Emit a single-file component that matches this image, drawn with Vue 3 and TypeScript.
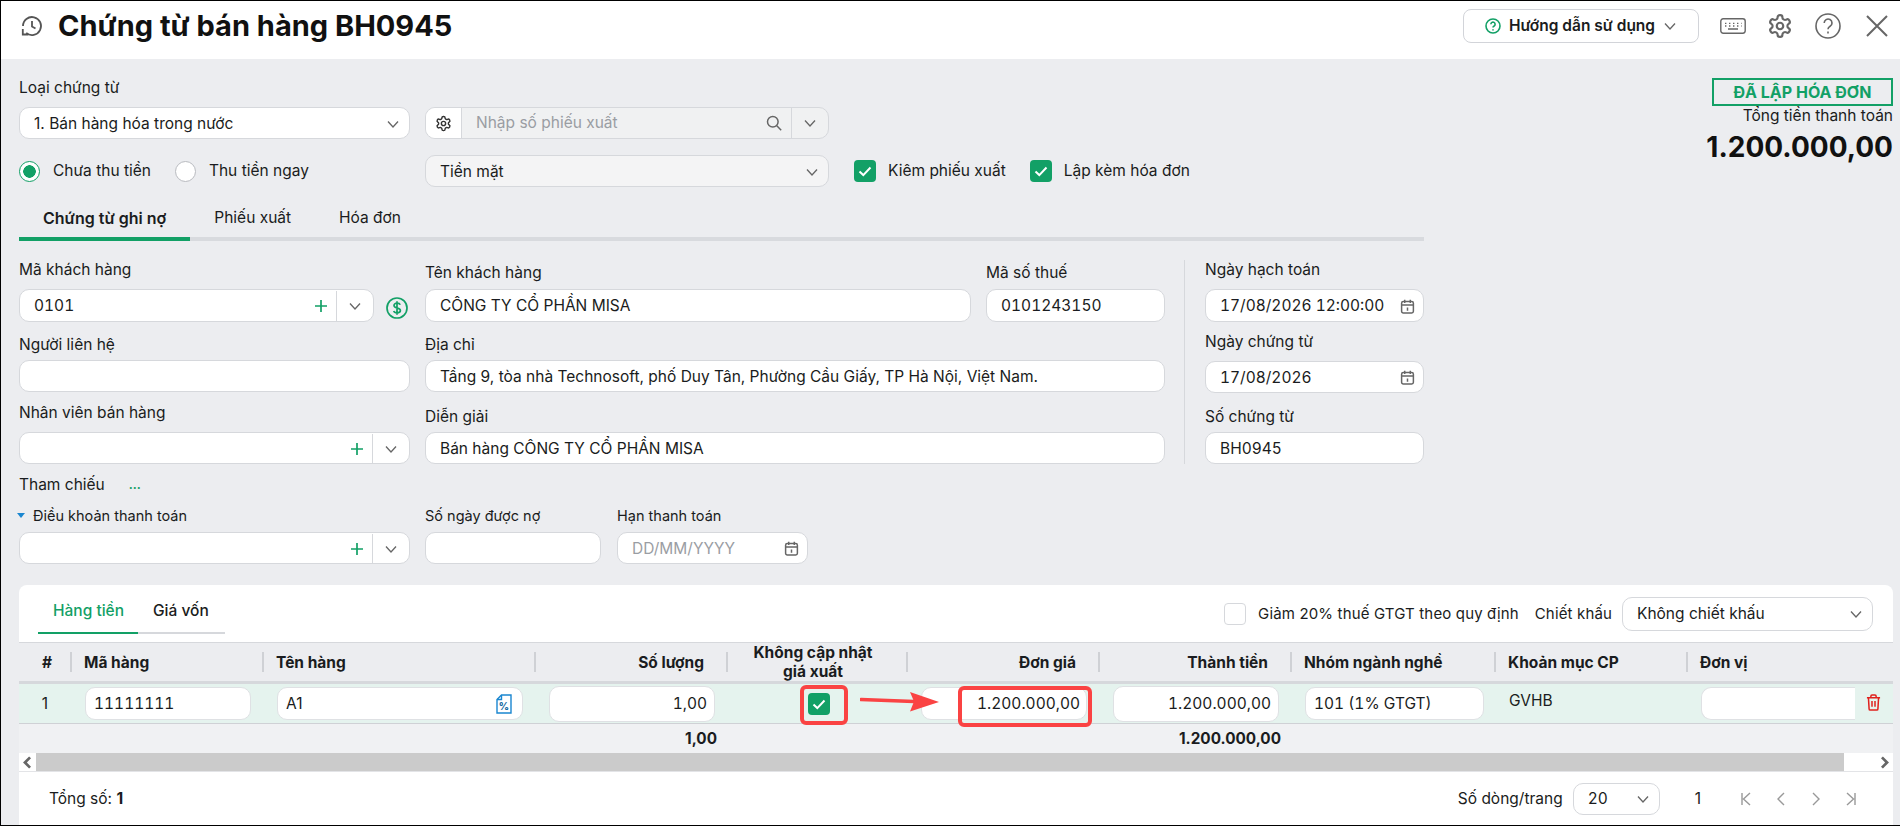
<script setup lang="ts">
interface Column {
  title: string
  width: number
  align?: 'right' | 'center'
}

const columns: Column[] = [
  { title: '#', width: 52, align: 'center' },
  { title: 'Mã hàng', width: 192 },
  { title: 'Tên hàng', width: 272 },
  { title: 'Số lượng', width: 192, align: 'right' },
  { title: 'Không cập nhật giá xuất', width: 180, align: 'center' },
  { title: 'Đơn giá', width: 192, align: 'right' },
  { title: 'Thành tiền', width: 192, align: 'right' },
  { title: 'Nhóm ngành nghề', width: 204 },
  { title: 'Khoản mục CP', width: 192 },
  { title: 'Đơn vị', width: 206 },
]

const gridTemplate = columns.map((c) => `${c.width}px`).join(' ')
</script>

<template>
  <div class="app">
    <svg class="sprite" aria-hidden="true">
      <symbol id="chev" viewBox="0 0 12 12"><path d="M1 3.500l5 5.500 5-5.500" fill="none" stroke="currentColor" stroke-width="1.3" /></symbol>
      <symbol id="plus" viewBox="0 0 14 14"><path d="M7 1v12M1 7h12" fill="none" stroke="currentColor" stroke-width="1.7" /></symbol>
      <symbol id="cal" viewBox="0 0 14 14">
        <g fill="none" stroke="currentColor" stroke-width="1.4">
          <rect x="1.500" y="2.400" width="11" height="10.600" rx="1.600" />
          <path d="M1.500 5.600h11M4.400 .8v3M9.600 .8v3M7 8v3" />
        </g>
      </symbol>
      <symbol id="gear" viewBox="0 0 24 24">
        <g fill="none" stroke="currentColor" stroke-width="2">
          <path d="M12.220 2h-.44a2 2 0 0 0-2 2v.18a2 2 0 0 1-1 1.730l-.43.25a2 2 0 0 1-2 0l-.15-.08a2 2 0 0 0-2.730.73l-.22.38a2 2 0 0 0 .73 2.730l.15.1a2 2 0 0 1 1 1.720v.51a2 2 0 0 1-1 1.740l-.15.09a2 2 0 0 0-.73 2.730l.22.38a2 2 0 0 0 2.730.73l.15-.08a2 2 0 0 1 2 0l.43.25a2 2 0 0 1 1 1.730V20a2 2 0 0 0 2 2h.44a2 2 0 0 0 2-2v-.18a2 2 0 0 1 1-1.730l.43-.25a2 2 0 0 1 2 0l.15.08a2 2 0 0 0 2.730-.73l.22-.39a2 2 0 0 0-.73-2.730l-.15-.08a2 2 0 0 1-1-1.740v-.5a2 2 0 0 1 1-1.740l.15-.09a2 2 0 0 0 .73-2.730l-.22-.38a2 2 0 0 0-2.730-.73l-.15.08a2 2 0 0 1-2 0l-.43-.25a2 2 0 0 1-1-1.730V4a2 2 0 0 0-2-2z" />
          <circle cx="12" cy="12" r="3" />
        </g>
      </symbol>
      <symbol id="tick" viewBox="0 0 22 22"><path d="M5.500 11.500l3.800 3.600 7.200-7.600" fill="none" stroke="#fff" stroke-width="2" /></symbol>
    </svg>

    <header class="topbar">
      <svg class="history" viewBox="0 0 24 24" fill="none" stroke="#555" stroke-width="1.800">
        <path d="M3 12a9 9 0 1 1 3.200 6.900" />
        <path d="M2.800 15v5.500h5.500" />
        <path d="M12 7v5.500l3.500 2" />
      </svg>
      <h1 class="title">Chứng từ bán hàng BH0945</h1>
      <button class="guide">
        <svg class="guide-help" viewBox="0 0 16 16" fill="none" stroke="#12a066" stroke-width="1.600">
          <circle cx="8" cy="8" r="7" />
          <path d="M5.900 6.200a2.100 2.100 0 1 1 3.200 1.800c-.7.4-1.100.8-1.100 1.600" />
          <path d="M8 11.200v1.200" />
        </svg>
        <span>Hướng dẫn sử dụng</span>
        <svg class="icon-12"><use href="#chev" /></svg>
      </button>
      <svg class="kbd" viewBox="0 0 26 16" fill="none" stroke="#666" stroke-width="1.400">
        <rect x=".8" y=".8" width="24.400" height="14.400" rx="2.400" />
        <path d="M5 5.400h1.400M9 5.400h1.400M13 5.400h1.400M17 5.400h1.400M21 5.400h.6M5 8h1.400M9 8h1.400M13 8h1.400M17 8h1.400M21 8h.6M8 11h10" />
      </svg>
      <svg class="top-gear"><use href="#gear" /></svg>
      <svg class="top-help" viewBox="0 0 26 26" fill="none" stroke="#666" stroke-width="1.600">
        <circle cx="13" cy="13" r="12" />
        <path d="M9.200 10a3.900 3.900 0 1 1 5.900 3.300c-1.300.8-2.100 1.400-2.100 3" />
        <path d="M13 18.400v2" />
      </svg>
      <svg class="top-close" viewBox="0 0 22 22" fill="none" stroke="#666" stroke-width="2">
        <path d="M1 1l20 20M21 1L1 21" />
      </svg>
    </header>

    <main class="body">
      <section class="form">
        <div class="row-top">
          <div class="col-left">
            <label class="lbl mb9">Loại chứng từ</label>
            <div class="input select">
              <span class="grow">1. Bán hàng hóa trong nước</span>
              <svg class="icon-12"><use href="#chev" /></svg>
            </div>
          </div>
          <div class="search">
            <span class="search-gear"><svg class="icon-16"><use href="#gear" /></svg></span>
            <span class="search-text">Nhập số phiếu xuất</span>
            <svg class="search-icon" viewBox="0 0 16 16" fill="none" stroke="#666" stroke-width="1.500">
              <circle cx="6.800" cy="6.800" r="5.300" />
              <path d="M10.800 10.800l4.400 4.400" />
            </svg>
            <span class="search-chev"><svg class="icon-12"><use href="#chev" /></svg></span>
          </div>
        </div>

        <div class="row-options">
          <div class="col-left radios">
            <span class="radio on"></span>
            <span class="radio-text">Chưa thu tiền</span>
            <span class="radio"></span>
            <span>Thu tiền ngay</span>
          </div>
          <div class="input select input-muted pay">
            <span class="grow">Tiền mặt</span>
            <svg class="icon-12"><use href="#chev" /></svg>
          </div>
          <span class="check"><svg><use href="#tick" /></svg></span>
          <span class="check-text">Kiêm phiếu xuất</span>
          <span class="check"><svg><use href="#tick" /></svg></span>
          <span class="check-text">Lập kèm hóa đơn</span>
        </div>

        <nav class="tabs">
          <span class="tab active">Chứng từ ghi nợ</span>
          <span class="tab">Phiếu xuất</span>
          <span class="tab">Hóa đơn</span>
        </nav>

        <div class="columns">
          <div class="col-left first-col">
            <label class="lbl mb9">Mã khách hàng</label>
            <div class="customer">
              <div class="input h33 grow">
                <span class="grow num">0101</span>
                <svg class="plus"><use href="#plus" /></svg>
                <span class="addon"><svg class="icon-12"><use href="#chev" /></svg></span>
              </div>
              <svg class="dollar" viewBox="0 0 22 22" fill="none" stroke="#12a066" stroke-width="1.700">
                <circle cx="11" cy="11" r="10" />
                <path d="M14.200 7.800c-.4-1.100-1.600-1.600-3.200-1.600-1.800 0-3 .9-3 2.300 0 3.200 6.400 1.800 6.400 5 0 1.400-1.300 2.300-3.300 2.300-1.700 0-3-.7-3.400-1.900M11 4.200v13.600" />
              </svg>
            </div>
            <label class="lbl mt13">Người liên hệ</label>
            <div class="input"></div>
            <label class="lbl mt11 mb9">Nhân viên bán hàng</label>
            <div class="input">
              <span class="grow"></span>
              <svg class="plus"><use href="#plus" /></svg>
              <span class="addon"><svg class="icon-12"><use href="#chev" /></svg></span>
            </div>
          </div>

          <div class="col-mid">
            <div class="mid-row">
              <div class="grow">
                <label class="lbl mb6">Tên khách hàng</label>
                <div class="input h33">CÔNG TY CỔ PHẦN MISA</div>
              </div>
              <div class="tax">
                <label class="lbl mb6">Mã số thuế</label>
                <div class="input h33 num">0101243150</div>
              </div>
            </div>
            <label class="lbl mt13">Địa chỉ</label>
            <div class="input">Tầng 9, tòa nhà Technosoft, phố Duy Tân, Phường Cầu Giấy, TP Hà Nội, Việt Nam.</div>
            <label class="lbl mt15">Diễn giải</label>
            <div class="input">Bán hàng CÔNG TY CỔ PHẦN MISA</div>
          </div>

          <div class="col-right">
            <label class="lbl mb9">Ngày hạch toán</label>
            <div class="input h33 date">
              <span class="grow num">17/08/2026 12:00:00</span>
              <svg class="icon-14"><use href="#cal" /></svg>
            </div>
            <label class="lbl mt10 mb9">Ngày chứng từ</label>
            <div class="input date">
              <span class="grow num">17/08/2026</span>
              <svg class="icon-14"><use href="#cal" /></svg>
            </div>
            <label class="lbl mt14">Số chứng từ</label>
            <div class="input num">BH0945</div>
          </div>
        </div>

        <div class="reference">
          <span>Tham chiếu</span>
          <span class="dots">...</span>
        </div>

        <div class="terms">
          <div class="col-left">
            <label class="lbl small"><i class="caret"></i>Điều khoản thanh toán</label>
            <div class="input">
              <span class="grow"></span>
              <svg class="plus"><use href="#plus" /></svg>
              <span class="addon"><svg class="icon-12"><use href="#chev" /></svg></span>
            </div>
          </div>
          <div class="term-days">
            <label class="lbl small">Số ngày được nợ</label>
            <div class="input"></div>
          </div>
          <div class="term-date">
            <label class="lbl small">Hạn thanh toán</label>
            <div class="input date">
              <span class="grow placeholder">DD/MM/YYYY</span>
              <svg class="icon-14"><use href="#cal" /></svg>
            </div>
          </div>
        </div>
      </section>

      <aside class="summary">
        <div class="badge">ĐÃ LẬP HÓA ĐƠN</div>
        <div class="sum-label">Tổng tiền thanh toán</div>
        <div class="sum-value">1.200.000,00</div>
      </aside>
    </main>

    <section class="panel">
      <div class="panel-head">
        <div class="sub-tabs">
          <span class="sub-tab active">Hàng tiền</span>
          <span class="sub-tab">Giá vốn</span>
        </div>
        <span class="box"></span>
        <span class="tool-text">Giảm 20% thuế GTGT theo quy định</span>
        <span class="tool-text">Chiết khấu</span>
        <div class="input select discount">
          <span class="grow">Không chiết khấu</span>
          <svg class="icon-12"><use href="#chev" /></svg>
        </div>
      </div>

      <div class="thead" :style="{ gridTemplateColumns: gridTemplate }">
        <div v-for="(col, i) in columns" :key="col.title" class="th" :class="col.align">
          <span>{{ col.title }}</span>
          <i v-if="i < columns.length - 1" class="sep"></i>
        </div>
      </div>

      <div class="tbody" :style="{ gridTemplateColumns: gridTemplate }">
        <div class="td center">1</div>
        <div class="td"><div class="cell-input num">11111111</div></div>
        <div class="td">
          <div class="cell-input name">
            <span class="grow">A1</span>
            <svg class="doc" viewBox="0 0 16 20" fill="none" stroke="#1a86d0" stroke-width="1.400">
              <path d="M5.500 1H15V19H1V5.500z" />
              <path d="M5.500 1v4.500H1" />
              <text x="8" y="15.500" text-anchor="middle" font-size="10" font-weight="800" stroke="none" fill="#13689f">%</text>
            </svg>
          </div>
        </div>
        <div class="td"><div class="cell-input tall right num">1,00</div></div>
        <div class="td check-cell"><span class="check"><svg><use href="#tick" /></svg></span></div>
        <div class="td"><div class="cell-input right price num">1.200.000,00</div></div>
        <div class="td"><div class="cell-input tall right num">1.200.000,00</div></div>
        <div class="td"><div class="cell-input wide-cell num">101 (1% GTGT)</div></div>
        <div class="td plain">GVHB</div>
        <div class="td last">
          <div class="cell-input open"></div>
          <svg class="trash" viewBox="0 0 16 18" fill="none" stroke="#e0201c" stroke-width="1.600">
            <path d="M1 4h14M5.200 4V2.200c0-.7.5-1.200 1.200-1.200h3.200c.7 0 1.200.5 1.200 1.200V4M2.600 4l.7 11.800c0 .7.6 1.200 1.200 1.200h7c.6 0 1.200-.5 1.200-1.200L13.400 4M6.400 7.500v6M9.600 7.500v6" />
          </svg>
        </div>
      </div>

      <div class="tfoot" :style="{ gridTemplateColumns: gridTemplate }">
        <span class="qty-total">1,00</span>
        <span class="money-total">1.200.000,00</span>
      </div>

      <div class="scroll">
        <svg class="scroll-btn" viewBox="0 0 10 10" fill="none" stroke="#666" stroke-width="1.600"><path d="M6.500 2L3.500 5l3 3" /></svg>
        <div class="scroll-thumb"></div>
        <svg class="scroll-btn end" viewBox="0 0 10 10" fill="none" stroke="#666" stroke-width="1.600"><path d="M3.500 2l3 3-3 3" /></svg>
      </div>

      <footer class="pager">
        <span class="total">Tổng số: <b>1</b></span>
        <span class="per-page">Số dòng/trang</span>
        <div class="input select page-size">
          <span class="grow num">20</span>
          <svg class="icon-12"><use href="#chev" /></svg>
        </div>
        <span class="page-num">1</span>
        <svg class="page-ico first-ico" viewBox="0 0 12 14" fill="none" stroke="#999" stroke-width="1.400"><path d="M2 1v12M10 1L3.500 7l6.500 6" /></svg>
        <svg class="page-ico" viewBox="0 0 12 14" fill="none" stroke="#999" stroke-width="1.400"><path d="M9 1L3 7l6 6" /></svg>
        <svg class="page-ico" viewBox="0 0 12 14" fill="none" stroke="#999" stroke-width="1.400"><path d="M3 1l6 6-6 6" /></svg>
        <svg class="page-ico" viewBox="0 0 12 14" fill="none" stroke="#999" stroke-width="1.400"><path d="M10 1v12M2 1l6.500 6L2 13" /></svg>
      </footer>

      <!-- annotations drawn over the screenshot -->
      <i class="mark mark-check"></i>
      <i class="mark mark-price"></i>
      <svg class="mark-arrow" viewBox="0 0 80 20">
        <path d="M1 7.500L54 9.500" stroke="#fa4343" stroke-width="3.600" stroke-linecap="round" fill="none" />
        <path d="M50 0L79 10 50 19.500 54 9.500z" fill="#fa4343" />
      </svg>
    </section>
  </div>
</template>

<style scoped>
.app {
  position: relative;
  display: flex;
  flex-direction: column;
  width: 1900px;
  height: 826px;
  box-sizing: border-box;
  border: solid #000;
  border-width: 1px 0 1px 1px;
  background: #ecedf0;
  color: #1a1c20;
  font: 15.5px/20px Inter, "Noto Sans", sans-serif;
  overflow: hidden;
}

.sprite {
  position: absolute;
  width: 0;
  height: 0;
}

.grow {
  flex: 1;
  min-width: 0;
}

.num {
  font-variant-numeric: tabular-nums;
}

.icon-12 {
  width: 12px;
  height: 12px;
  flex: none;
  color: #666;
}

.icon-14 {
  width: 15px;
  height: 15px;
  flex: none;
  color: #666;
}

.icon-16 {
  width: 17px;
  height: 17px;
  color: #333;
}

/* top bar */
.topbar {
  display: flex;
  align-items: center;
  height: 58px;
  flex: none;
  box-sizing: border-box;
  padding: 0 12px 9px 19px;
  background: #fff;
}

.history {
  width: 24px;
  height: 24px;
  margin-right: 14px;
}

.title {
  flex: 1;
  margin: 0;
  font-size: 29px;
  line-height: 34px;
  font-weight: 700;
  color: #111;
}

.guide {
  display: flex;
  align-items: center;
  width: 236px;
  height: 34px;
  box-sizing: border-box;
  padding: 0 0 0 21px;
  border: 1px solid #d2d4d9;
  border-radius: 8px;
  background: #fff;
  color: #1a1c20;
  font: 600 15.5px Inter, sans-serif;
  white-space: nowrap;
}

.guide-help {
  width: 16px;
  height: 16px;
  margin-right: 8px;
}

.guide .icon-12 {
  margin-left: 9px;
}

.kbd {
  width: 26px;
  height: 16px;
  margin-left: 21px;
}

.top-gear {
  width: 26px;
  height: 26px;
  margin-left: 21px;
  color: #666;
}

.top-help {
  width: 26px;
  height: 26px;
  margin-left: 22px;
}

.top-close {
  width: 22px;
  height: 22px;
  margin-left: 25px;
}

/* form */
.body {
  display: flex;
  height: 526px;
  flex: none;
  padding: 19px 7px 0 18px;
  box-sizing: border-box;
}

.form {
  width: 1405px;
  flex: none;
}

.lbl {
  display: block;
  height: 20px;
  margin-bottom: 5px;
  white-space: nowrap;
}

.mb6 { margin-bottom: 6px; }
.mb9 { margin-bottom: 9px; }
.mt10 { margin-top: 10px; }
.mt11 { margin-top: 11px; }
.mt13 { margin-top: 13px; }
.mt14 { margin-top: 14px; }
.mt15 { margin-top: 15px; }

.input {
  display: flex;
  align-items: center;
  height: 32px;
  box-sizing: border-box;
  padding: 1px 14px 0;
  border: 1px solid #d6d8dc;
  border-radius: 10px;
  background: #fff;
  white-space: nowrap;
  overflow: hidden;
}

.select {
  padding-right: 10px;
}

.h33 {
  height: 33px;
}

.input-muted {
  background: #f4f4f5;
}

.row-top {
  display: flex;
  align-items: flex-end;
  gap: 15px;
}

.col-left {
  width: 391px;
  flex: none;
}

.search {
  display: flex;
  align-items: center;
  width: 404px;
  height: 32px;
  box-sizing: border-box;
  border: 1px solid #d6d8dc;
  border-radius: 10px;
  background: #f0f1f2;
  overflow: hidden;
}

.search-gear {
  display: flex;
  align-items: center;
  justify-content: center;
  width: 35px;
  height: 100%;
  flex: none;
  background: #fff;
  border-right: 1px solid #d6d8dc;
}

.search-text {
  flex: 1;
  padding-left: 14px;
  color: #9a9da3;
}

.search-icon {
  width: 16px;
  height: 16px;
  margin-right: 9px;
}

.search-chev {
  display: flex;
  align-items: center;
  justify-content: center;
  width: 36px;
  height: 100%;
  flex: none;
  border-left: 1px solid #d6d8dc;
}

.row-options {
  display: flex;
  align-items: center;
  margin-top: 16px;
  height: 32px;
}

.radios {
  display: flex;
  align-items: center;
}

.radio {
  width: 21px;
  height: 21px;
  flex: none;
  box-sizing: border-box;
  margin-right: 13px;
  border: 1px solid #b9bbc0;
  border-radius: 50%;
  background: #fff;
}

.radio.on {
  border-color: #12a066;
  background: radial-gradient(circle, #12a066 0 6px, #fff 6.5px);
}

.radio-text {
  margin-right: 24px;
}

.pay {
  width: 404px;
  flex: none;
  margin-left: 15px;
}

.check {
  display: block;
  width: 22px;
  height: 22px;
  flex: none;
  border-radius: 4px;
  background: #12a066;
}

.check svg {
  display: block;
  width: 22px;
  height: 22px;
}

.row-options > .check:first-of-type {
  margin-left: 25px;
}

.check-text {
  margin-left: 12px;
  margin-right: 24px;
}

.tabs {
  display: flex;
  height: 29px;
  margin-top: 21px;
  border-bottom: 4px solid #d8dade;
}

.tab {
  height: 29px;
  padding: 0 24px;
}

.tab.active {
  border-bottom: 4px solid #12a066;
  font-size: 16px;
  font-weight: 600;
}

.columns {
  display: flex;
  margin-top: 19px;
  height: 204px;
}

.first-col {
  margin-right: 15px;
}

.customer {
  display: flex;
  align-items: flex-start;
}

.customer .input {
  padding-right: 0;
}

.plus {
  width: 14px;
  height: 14px;
  flex: none;
  color: #12a066;
  margin-right: 8px;
}

.addon {
  display: flex;
  align-items: center;
  justify-content: center;
  width: 36px;
  height: 100%;
  flex: none;
  margin-right: -14px;
  border-left: 1px solid #d6d8dc;
}

.customer .addon {
  margin-right: 0;
}

.dollar {
  width: 22px;
  height: 22px;
  flex: none;
  margin: 8px 2px 0 12px;
}

.col-mid {
  width: 740px;
  flex: none;
  padding-top: 3px;
}

.mid-row {
  display: flex;
  gap: 15px;
}

.tax {
  width: 179px;
  flex: none;
}

.col-right {
  width: 219px;
  flex: none;
  margin-left: 19px;
  padding-left: 20px;
  border-left: 1px solid #d6d8dc;
}

.date {
  padding-right: 8px;
}

.reference {
  display: flex;
  gap: 24px;
  margin-top: 11px;
}

.dots {
  color: #12a066;
  font-weight: 700;
  font-size: 12px;
}

.terms {
  display: flex;
  gap: 15px;
  margin-top: 11px;
}

.small {
  font-size: 14.5px;
  margin-bottom: 6px;
}

.caret {
  display: inline-block;
  width: 0;
  height: 0;
  margin: 0 8px 3px -2px;
  border: 4px solid transparent;
  border-top: 5px solid #1a86d0;
  border-bottom: 0;
  vertical-align: middle;
}

.term-days {
  width: 176px;
}

.term-date {
  width: 191px;
  margin-left: 1px;
}

.placeholder {
  color: #9a9da3;
}

/* summary */
.summary {
  flex: 1;
  min-width: 0;
  display: flex;
  flex-direction: column;
  align-items: flex-end;
  white-space: nowrap;
}

.badge {
  width: 181px;
  height: 28px;
  flex: none;
  box-sizing: border-box;
  border: 2px solid #12a066;
  color: #12a066;
  font-size: 16px;
  font-weight: 700;
  line-height: 24px;
  text-align: center;
}

.sum-label {
  font-size: 15.5px;
  line-height: 20px;
}

.sum-value {
  margin-top: 4px;
  font-size: 28px;
  line-height: 34px;
  font-weight: 700;
  color: #111;
}

/* detail panel */
.panel {
  position: relative;
  display: flex;
  flex-direction: column;
  flex: 1;
  margin: 0 7px 0 18px;
  border-radius: 8px 8px 0 0;
  background: #fff;
}

.panel-head {
  display: flex;
  align-items: center;
  height: 58px;
  flex: none;
  padding-left: 19px;
  padding-right: 20px;
  box-sizing: border-box;
  border-bottom: 1px solid #d6d8dc;
}

.sub-tabs {
  display: flex;
  width: 187px;
  height: 36px;
  margin-top: 11px;
  margin-right: auto;
  border-bottom: 2px solid #d6d8dc;
  align-self: flex-start;
}

.sub-tab {
  height: 36px;
  padding: 5px 14px 0 15px;
  box-sizing: border-box;
  font-weight: 500;
  white-space: nowrap;
}

.sub-tab.active {
  height: 38px;
  border-bottom: 2px solid #12a066;
  color: #12a066;
}

.box {
  width: 22px;
  height: 22px;
  flex: none;
  box-sizing: border-box;
  border: 1px solid #d6d8dc;
  border-radius: 4px;
  margin-right: 12px;
}

.tool-text {
  margin-right: 16px;
  font-size: 15px;
  letter-spacing: 0.01em;
}

.tool-text + .tool-text {
  margin-right: 10px;
}

.discount {
  width: 251px;
  height: 34px;
}

.thead {
  display: grid;
  height: 38px;
  flex: none;
  background: #ecedf0;
  border-bottom: 3px solid #d6d8dc;
  box-sizing: content-box;
  font-size: 15.5px;
}

.th {
  position: relative;
  display: flex;
  align-items: center;
  padding-left: 13px;
  padding-right: 23px;
  font-weight: 700;
  line-height: 19px;
}

.th.right {
  justify-content: flex-end;
}

.th.center {
  justify-content: center;
  text-align: center;
  padding: 0 26px 0 18px;
}

.th:first-child {
  padding: 0 0 0 4px;
}

.sep {
  position: absolute;
  right: -1px;
  top: 9px;
  width: 2px;
  height: 20px;
  background: #cfd1d5;
}

.tbody {
  display: grid;
  height: 40px;
  flex: none;
  background: #e5f3ee;
  border-bottom: 1px solid #cfd1d5;
  box-sizing: border-box;
}

.td {
  display: flex;
  align-items: center;
  padding-left: 14px;
  padding-right: 12px;
  min-width: 0;
}

.td.center {
  justify-content: center;
  padding: 0;
}

.cell-input {
  display: flex;
  align-items: center;
  width: 100%;
  height: 33px;
  box-sizing: border-box;
  padding: 0 8px;
  border: 1px solid #dfe1e4;
  border-radius: 10px;
  background: #fff;
  white-space: nowrap;
}

.cell-input.tall {
  height: 36px;
}

.cell-input.right {
  justify-content: flex-end;
  padding-right: 7px;
}

.cell-input.price {
  padding-right: 6px;
}

.cell-input.name {
  padding-right: 10px;
}

.cell-input.wide-cell {
  width: 179px;
  flex: none;
}

.doc {
  width: 16px;
  height: 20px;
}

.check-cell {
  padding-left: 81px;
}

.plain {
  padding-bottom: 5px;
}

.last {
  padding-right: 0;
}

.cell-input.open {
  width: 154px;
  flex: none;
  border-right: 0;
  border-radius: 10px 0 0 10px;
}

.trash {
  width: 15px;
  height: 17px;
  margin-left: 11px;
  margin-bottom: 3px;
}

.tfoot {
  position: relative;
  display: grid;
  height: 29px;
  flex: none;
  background: #f0f1f3;
  font-size: 15.3px;
  font-weight: 700;
  line-height: 29px;
  text-align: right;
}

.qty-total {
  grid-column: 1 / 5;
  padding-right: 10px;
}

.money-total {
  grid-column: 5 / 8;
  padding-right: 10px;
}

.scroll {
  display: flex;
  align-items: center;
  height: 18px;
  flex: none;
  border-bottom: 1px solid #e3e4e7;
  box-sizing: content-box;
}

.scroll-btn {
  width: 17px;
  height: 17px;
  flex: none;
}

.scroll-btn.end {
  margin-left: 32px;
}

.scroll-thumb {
  flex: 1;
  height: 18px;
  background: #cbcbcb;
}

.pager {
  display: flex;
  align-items: center;
  flex: 1;
  padding: 0 36px 0 30px;
}

.total {
  margin-right: auto;
}

.per-page {
  margin-right: 10px;
}

.page-size {
  width: 87px;
  flex: none;
}

.page-num {
  margin-left: 35px;
}

.page-ico {
  width: 12px;
  height: 14px;
  margin-left: 23px;
}

.first-ico {
  margin-left: 39px;
}

/* red annotations */
.mark {
  position: absolute;
  box-sizing: border-box;
  border: 4px solid #fa4343;
  border-radius: 6px;
}

.mark-check {
  left: 781px;
  top: 100px;
  width: 48px;
  height: 40px;
}

.mark-price {
  left: 939px;
  top: 101px;
  width: 134px;
  height: 41px;
}

.mark-arrow {
  position: absolute;
  left: 841px;
  top: 107px;
  width: 80px;
  height: 20px;
}
</style>

<style>
html,
body {
  margin: 0;
  background: #ecedf0;
}
</style>
